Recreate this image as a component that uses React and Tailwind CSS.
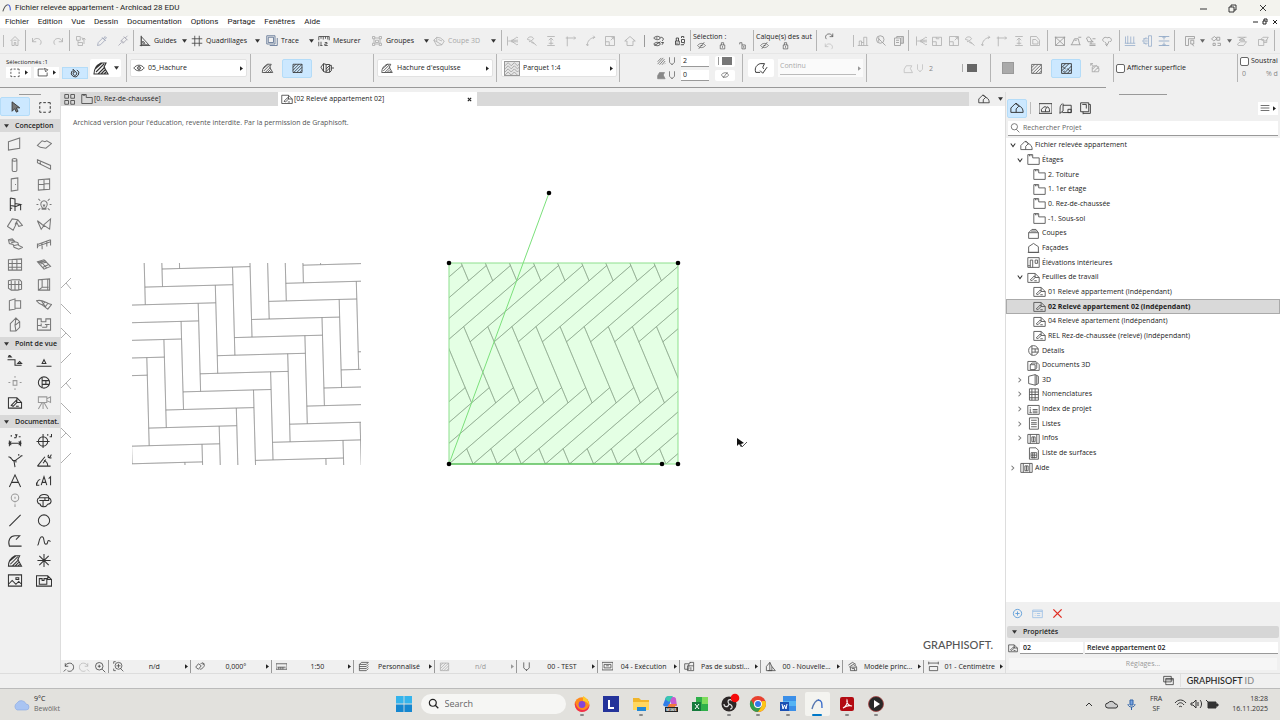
import React, { useState } from 'react';

// Line icons, all on a 16 x 16 grid
const ICONS = {
  home: 'M2 8 8 2l6 6M4 7v7h3v-4h2v4h3V7M6 7h4',
  undo: 'M2 4v5h5M2 9c2-4 5-5 8-4s5 5 2 8',
  redo: 'M14 4v5H9M14 9c-2-4-5-5-8-4s-5 5-2 8',
  pick: 'M2 2h5v5H2zM4 10h6v4H4zM9 3l2 4M12 12V4M10 6l2-2 2 2M4 7v3',
  dropper: 'M2 14l1-4 6-6 3 3-6 6zM8 3l5 5M10 5l2-3 2 2-3 2',
  syringe: 'M2 14l4-4M5 8l3 3 5-5-3-3zM9 2l5 5M11 4l3-3M6 7l3 3',
  setsquare: 'M3 1v14M1 14h14M3 2l10 11H3zM5 8v3h3z',
  grid: 'M5 1v14M11 1v14M1 5h14M1 11h14',
  trace: 'M5 14h10V4M1 1h11v11H1zM3 3h7v7H3z',
  ruler: 'M1 7V2h14v5M1 9v6M4 2v3M7 2v4M10 2v3M13 2v4M4 9v5M3 14h3M9 10h3v2H9v2h4',
  group: 'M2 2h3v3H2zM11 2h3v3h-3zM2 11h3v3H2zM11 11h3v3h-3zM5 4h6M5 12h6M4 5v6M12 5v6M6 7h4v3H6z',
  cut3d: 'M1 7l4-4 5 1 5 4-3 5-7 1zM5 3v6l7 4M5 9L1 7M7 6l5 2',
  trim: 'M2 2v12M3 8h4l6-4a2 2 0 1 1 1 3H7M7 8l6 4a2 2 0 1 0 1-3H7',
  adjust: 'M2 6c0-4 7-5 8-1l-3 3 7 6M7 8L4 9M2 6l4 1M11 11l-4-1',
  split: 'M3 2h10M3 14h10M8 5v8M5 7l3-3 3 3M5 11h6',
  intersect: 'M3 15V4h11M3 2v2H1M12 2l2 2-2 2',
  fillet: 'M3 14C3 8 7 4 13 3M11 1l2 2-2 2M2 12l1 2 2-1',
  resize: 'M2 2h12v12H2zM2 9h5v5M9 7l4-4M10 3h3v3',
  roof: 'M1 8l7-6 7 6H12v6H4V8z',
  layers: 'M1 4c3-3 7-3 9 0-2 3-6 3-9 0zM4 4h2M10 3c4 0 5 3 2 5M1 12c3-3 7-3 9 0-2 3-6 3-9 0zM2 14l8-5M11 10h3l-2 3',
  locks: 'M2 8h5v5H2zM3 8V4h3v4M4 10v2M10 6h4v4h-4zM10 4V2h3v2M12 13l2-2M9 13h4',
  lock: 'M4 7h8v7H4zM6 7V3h4v4M8 9v3',
  unlock: 'M7 7h6v7H7zM7 7V3H3v3M10 9v3',
  hidden: 'M1 8c4-5 10-5 14 0-4 5-10 5-14 0zM6 8h4M3 14L13 2',
  eye: 'M1 8c4-5 10-5 14 0-4 5-10 5-14 0zM6 8a2 2 0 1 0 4 0 2 2 0 1 0-4 0M8 7v2',
  levels: 'M1 14h14M3 14V8h3v6M9 14V3h4v11M6 10h3',
  findsel: 'M2 6a5 5 0 1 0 10 0 5 5 0 1 0-10 0M10 10l4 4M5 3v6M5 5l4 4',
  boxes: 'M2 4h8v10H2zM5 4V2h9v9h-4M4 7h4M4 10h4M12 2v9',
  box: 'M2 3h12v11H2zM2 9h5v5M7 3v2h4',
  geometry: 'M9 3H1v10h13V8M10 2l5 2-3 3z',
  solid: 'M2 2h8l4 5v7H2zM5 6h4l3 3v3H5z',
  crossbox: 'M2 3h12v11H2zM2 3l12 11M14 3L2 14M1 3h2M13 3h2',
  offset: 'M1 13h13M2 13l4-8h5l2 8M6 7h3M11 3h4',
  bool: 'M2 4c3-3 6 0 6 3l3 2H4zM6 12h8M6 14h8M8 9v3M10 5h4',
  cloudcut: 'M4 9c-5-3 2-8 4-5 5-3 8 4 4 5M5 9l3 4M11 8l-3 6M6 12l2 3',
  alignb: 'M1 14h14M2 2v9M5 1v11M9 2v9M13 2v9M1 11h14',
  alignr: 'M3 5h6M3 8h6M3 11h6M7 3l-5 5 5 5M10 1v14h4V1z',
  alignm: 'M1 2h14M1 8h14M1 14h14M8 3v3M6 4l2-2 2 2M8 10v3M6 12l2 2 2-2',
  anchor: 'M2 2h12v3H6v9H2zM9 7h4v5H9zM11 12l2 3',
  distrib: 'M2 5l4-3 3 3-4 3zM9 3h4v4H9zM4 11h3v3H4zM10 11h4v3h-4',
  elevate: 'M2 3h12M4 3l8 4H4l8-4M2 12l4-3h8l-4 5H3z',
  order: 'M2 6h7v8H2zM5 6l3-3h7l-3 5H9zM9 10h4V6',
  hatch: 'M1 14c0-6 3-9 7-11h5l-2 4 4 7zM3 12l8-8M5 14l7-7M8 14l4-4M11 14l2-2M2 9l7-6',
  hatchbox: 'M2 3h12v11H2zM2 7l4-4M2 11l8-8M3 14L14 3M7 14l7-7M11 14l3-3',
  wallhatch: 'M1 7l3-4 3 1v9L4 12zM4 3v9M7 4h4v9H7M11 5h2v6l-2 2M7 9l4-4M7 12l4-4M13 8h3',
  penhatch: 'M1 13L10 3M1 9l6-6M4 14l8-9M8 14l5-6M12 13l1-1',
  solidfill: 'M1 14V9l3-5h8l-2 4 3 6z',
  pen: 'M4 2v8l4 4 4-4V2M8 14v-2',
  noentry: 'M3 11a6 4 0 0 1 10-6 6 4 0 0 1-10 6zM4 14l9-12',
  contour: 'M2 13c-2-6 2-9 5-10h5l-2 4 1 2M2 13h5M7 11l3 3 5-7',
  marquee: 'M2 3h2M6 3h3M11 3h3v2M14 7v3M14 12v2h-2M9 14H6M4 14H2v-2M2 10V7M2 5V3',
  wall: 'M1 5l12-4v11L1 14z',
  slab: 'M1 9l5-5 3 1 2-1 5 3-6 5-6-1z',
  column: 'M5 3c0-2 5-2 5 0v11c0 2-5 2-5 0zM5 3c0 2 5 2 5 0',
  beam: 'M1 3l14 6v4L1 6zM4 5v3M1 3v3',
  door: 'M4 2l7-1v13l-7 1zM8 8h1',
  window: 'M2 3l12-1v11L2 14zM8 3v11M2 8l12-1',
  chair: 'M3 1v14M3 1l5 1v7M3 9l6 1 5-2-6-1M8 10v5M14 8v6M3 12h2',
  lamp: 'M6 11c-3-3-1-7 2-7s5 4 2 7v2H6zM6 12h4M2 2l2 2M14 2l-2 2M0 8h2M14 8h2M2 14l2-2M14 14l-2-2M7 8l1 2 1-2',
  roof2: 'M0 10l5-8 6 1 5 6-4 1-2-4-4 8zM11 3L8 8',
  mesh: 'M1 4l6 5 8-7-1 11-6-4-3 4zM1 4l5 4',
  stair: 'M1 3l4-1 3 3 3 1 1 3 4 2-4 2-5-2-1-3-4-1zM4 6l4-1M7 9l5-1M2 4h5',
  railing: 'M1 8l14-5M1 12V7M1 10l14-5M6 7v6M11 5v5M15 3v6',
  curtain: 'M1 3l14-1v12H1zM1 7h14M1 11h14M5 2v12M10 2v12',
  skylight: 'M1 5l7-2 7 7-7 3zM4 4l7 8M3 8l8-3M2 6l8-2M7 11l6-3',
  shelf: 'M1 4l4-1h8l2 2v8l-4 1H4l-3-2zM4 4v9M8 4v10M12 4v10M1 8h14',
  winbox: 'M2 3l12-1v12H2zM6 3v8h7M6 11l-4 3M12 3v11',
  panel: 'M2 4l6-2v11l-6 1zM8 4h6v8H8',
  shell: 'M0 4c6-2 9 2 16 4l-4 5C9 11 7 8 3 7zM5 4l5 7M9 5l-3 4M12 7l-3 4',
  morph: 'M3 7l6-6 4 4v6l-4 4H3zM9 1L8 9l1 6M8 9l5-4',
  zone: 'M1 2h4v3h5V2h5v12H1zM1 9h4M9 8h5M5 7v3M11 8v3M6 11h5',
  section: 'M0 5h8v6h7M1 2h3L2 0zM11 9l2-2 2 2z',
  elevation: 'M0 12h16M6 9l2-4 2 4z',
  interior: 'M6 6h4v5H6zM8 1v2M8 14v2M1 8h2M13 8h2',
  detail: 'M2 8a6 6 0 1 0 12 0A6 6 0 1 0 2 8M6 2v12M6 6h8M6 10h8M10 6v4',
  sheet: 'M1 3h9l5 5v6H1zM10 3v5h5M4 11l5-5 1 2-4 4zM9 12h3',
  camera: 'M2 2h9v6H2zM11 4l4-2v6l-4-2M6 8L2 15M7 8v7M8 8l4 7',
  dim: 'M1 11h14M2 8v6M14 8v6M4 9l-2 2 2 2M12 9l2 2-2 2M4 4V2M7 5h2l1-3H8M12 4h2',
  level: 'M2 9a5 5 0 1 0 10 0A5 5 0 1 0 2 9M7 1v15M0 9h14M12 3V1M14 4h2V1',
  radial: 'M3 5l4 4 1 6M7 9l8-6M1 4l3 1M5 8h4v2M12 3V1M14 3h2',
  angle: 'M1 14h14M1 14L9 4M8 8c3 1 4 3 4 6M7 11l3-4M13 5c2 0 2-3 3-3M13 2c-2 3 1 4 3 3',
  textA: 'M2 15L8 2l6 13M4 10h8',
  labelA: 'M0 13c1-5 2-6 4-6M0 10v3h3M5 13l3-9 3 9M6 10h4M13 6l2-2v9',
  tag: 'M4 5a4 4 0 1 0 8 0 4 4 0 1 0-8 0M8 4v2M8 10v1M8 12v3',
  change: 'M3 5c1-5 10-4 10 0 4 2 3 7-1 7-2 4-8 3-8 0-4-1-4-6-1-7zM3 5h10v3H7v7M3 8h4M9 5v3',
  line: 'M2 14L14 2',
  circle: 'M2 8a6 6 0 1 0 12 0A6 6 0 1 0 2 8',
  polyline: 'M15 14H2C0 8 3 3 8 3h5l-4 4',
  spline: 'M1 13c2 0 1-9 5-9 3 0 1 8 4 8 3 0 1-4 3-4 1 0 1 1 2 1',
  hotspot: 'M8 1v14M1 8h14M3 3l10 10M13 3L3 13',
  figure: 'M1 2h14v12H1zM1 12l4-4 4 4 3-3 3 3M9 5h3v2H9z',
  drawing: 'M0 3h12l4 4v7H0zM3 6h3v2h2V6h3v6H3zM12 3v4h4',
  storey: 'M1 2h6v4h8v8H1zM3 2v2M5 2v2',
  grid4: 'M1 2h5v5H1zM9 2h5v5H9zM1 10h5v5H1zM9 10h5v5H9z',
  house: 'M1 13V8l5-5h2l3 3M1 13h14M7 13V9l3-3c3 0 5 3 5 7M6 3c3 1 4 3 4 3',
  book: 'M0 2h16v12H0zM3 12V9l3-3h3M3 12h10M8 12V9l2-3c2 0 3 2 3 6',
  layout: 'M4 2C0 5 2 9 1 14M1 14l4-3V2M5 4h10v9H4M11 9h4v4h-4z',
  publish: 'M2 1h10v11H2zM4 3h5v5M12 3h2v11H5v-2M5 14v1',
  cutfold: 'M2 7l4-4h5l3 4v7H2zM2 7h12M5 5h7',
  facade: 'M2 7l6-4 6 4v7H2zM1 14h14',
  interieur: 'M1 2h14v12H1zM4 5v9M4 5h3v9M10 5h3v4h-3zM1 12h3',
  doc3d: 'M1 3h10l4 4v7H1zM4 7h6v6H4zM4 7l2-2h6v6l-2 2',
  view3d: 'M2 4l8-2 4 2v9l-4 2-8-2zM10 2v13M12 3v11',
  table: 'M3 1h11v14H3zM3 5h11M3 8h11M3 12h11M6 1v14M10 1v14',
  index: 'M1 3h14v11H1zM4 7v5M4 5v1M7 8h6M7 10h6M7 12h6M3 12h3',
  list: 'M3 1h11v14H3zM5 4h7M5 7h7M5 9h7M5 12h7',
  infos: 'M1 3h14v11H1zM4 3v11M6 6h4v6H6zM8 6v6M12 3v11',
  surfaces: 'M3 1h8l3 3v11H3zM5 7h7v6H5zM7 7v7M9 7v7M5 10h7',
  zoomback: 'M3 3v4h4M3 7c1-5 10-6 11 0s-5 8-8 6M1 14l3-3',
  zoomin: 'M2 7a5 5 0 1 0 10 0A5 5 0 1 0 2 7M11 11l4 4M7 5v4M5 7h4',
  fit: 'M3 7a5 5 0 1 0 10 0A5 5 0 1 0 3 7M11 11l4 4M8 4v6M5 7h6M1 1v3M1 1h3M1 14h3M1 11v3',
  rotate: 'M1 9l4-5 4 3-4 5zM8 4c4-2 7 1 5 4s-4 4-6 4M11 2l2 2-2 2',
  scale: 'M0 4h16v8H0zM4 9v3M7 9v3M10 9v3M2 9h12',
  stack: 'M5 2h10l-3 3H2zM2 8h10l3-3M2 11h10l3-3M2 14h10l3-3M2 5v9',
  frame: 'M0 2h16v11H0zM3 5h10v5H3zM6 7h4',
  override: 'M1 4h6v8H1zM5 7h9v7H5zM8 2h6v5M10 9v4M7 4l3-2',
  reno: 'M2 14V8l5-6 3 6v6zM7 2v12M10 8l5 6H4',
  model: 'M2 6l6-4 5 3M3 9l6-4 5 3M5 9h9v5H5zM7 11h4v3',
  dimstd: 'M1 1v4M15 1v4M1 3h14M2 8h12v6H2z',
  menu: 'M1 4h14M1 8h14M1 12h14',
  windows: 'M1 2h11v8H1zM4 12V5h11v9H4zM4 7h11'
};

const Icon = ({ name, className = 'w-3 h-3 text-[#555]' }) => (
  <svg viewBox="0 0 16 16" fill="none" stroke="currentColor" strokeWidth="1.1" className={`shrink-0 ${className}`} aria-hidden="true">
    <path d={ICONS[name]} />
  </svg>
);

const Down = ({ className = 'text-[#333]' }) => (
  <svg viewBox="0 0 6 4" className={`w-[5px] h-[4px] shrink-0 ${className}`} aria-hidden="true">
    <path d="M0 0h6L3 4z" fill="currentColor" />
  </svg>
);

const Right = ({ className = 'text-[#222]' }) => (
  <svg viewBox="0 0 4 6" className={`w-[3px] h-[5px] shrink-0 ${className}`} aria-hidden="true">
    <path d="M0 0v6l4-3z" fill="currentColor" />
  </svg>
);

const Group = ({ className, children }) => (
  <div className={`flex items-center shrink-0 h-full border-r border-[#b4b4b4] ${className}`}>{children}</div>
);

const IconButton = ({ name, tone = 'text-[#b0b0b0]' }) => (
  <button aria-label={name} className="flex items-center justify-center flex-1 h-5">
    <Icon name={name} className={`w-3 h-3 ${tone}`} />
  </button>
);

const ToolButton = ({ icon, label, className, arrow = true, tone = 'text-[#444]' }) => (
  <button className={`flex items-center shrink-0 h-5 ${className}`}>
    <Icon name={icon} className={`w-3 h-3 mr-[3px] ${tone}`} />
    <span>{label}</span>
    {arrow && <span className="ml-auto mr-1"><Down /></span>}
  </button>
);

// Barre de menu
const MENUS = ['Fichier', 'Edition', 'Vue', 'Dessin', 'Documentation', 'Options', 'Partage', 'Fenêtres', 'Aide'];

const TitleBar = () => (
  <header className="flex items-center h-4 bg-[#f3f3ee] text-[#222]">
    <svg viewBox="0 0 12 12" className="w-[10px] h-[10px] ml-[2px] mr-[3px]" fill="none" strokeWidth="1.3">
      <path d="M1 10C3 4 5 2 7 2" stroke="#555" />
      <path d="M7 2c2 0 3 3 3 7" stroke="#4058d8" />
    </svg>
    <h1 className="font-[Roboto,sans-serif] text-[8px] font-normal">Fichier relevée appartement - Archicad 28 EDU</h1>
    <svg viewBox="0 0 80 12" className="w-20 h-3 ml-auto mr-px" fill="none" stroke="#222" strokeWidth="0.9">
      <path d="M1 7h7M30 5h5v5h-5zM32 5V3h5v5h-2M61 3l6 6M67 3l-6 6" />
    </svg>
  </header>
);

const MenuBar = () => (
  <nav className="flex items-center h-3 bg-white pl-[5px] font-[Roboto,sans-serif] font-normal text-[8px]">
    <div className="flex gap-[9px]">
      {MENUS.map((m) => <button key={m}>{m}</button>)}
    </div>
    <svg viewBox="0 0 30 10" className="w-[30px] h-[10px] ml-auto" fill="none" stroke="#222">
      <path d="M3 5h5M13 4h3v3h-3zM14 4V2h3v3M23 3l4 4M27 3l-4 4" />
    </svg>
  </nav>
);

const LockBlock = ({ title, three }) => (
  <div className="w-full h-full pl-[2px] flex flex-col justify-center">
    <span className="whitespace-nowrap leading-[9px]">{title}</span>
    <div className="flex items-center gap-[11px] pl-[3px]">
      <Icon name="hidden" className="w-[11px] h-[9px] text-[#444]" />
      <Icon name="lock" className="w-[9px] h-[9px] text-[#444]" />
      {three && <Icon name="unlock" className="w-[9px] h-[9px] text-[#444]" />}
    </div>
  </div>
);

const EDIT_TOOLS = ['trim', 'adjust', 'split', 'intersect', 'fillet', 'resize', 'roof'];
const SHAPE_TOOLS = ['trim', 'box', 'resize', 'adjust', 'fillet', 'intersect', 'split', 'solid'];

const Toolbar = () => (
  <div className="flex items-center h-[25px] py-[2px] bg-[#f0f0f0] overflow-hidden">
    <Group className="w-[26px]">
      <span className="w-px h-3 ml-[3px] bg-[#bbb]" />
      <IconButton name="home" />
    </Group>
    <Group className="w-11">
      <IconButton name="undo" />
      <IconButton name="redo" />
    </Group>
    <Group className="w-16">
      <IconButton name="pick" />
      <IconButton name="dropper" tone="text-[#9fa6ba]" />
      <IconButton name="syringe" tone="text-[#a8a8b4]" />
    </Group>
    <Group className="w-[368px] pl-[5px]">
      <ToolButton icon="setsquare" label="Guides" className="w-[52px]" />
      <ToolButton icon="grid" label="Quadrillages" className="w-[73px]" />
      <ToolButton icon="trace" label="Trace" className="w-[54px] pl-[2px]" tone="text-[#5b7090]" />
      <ToolButton icon="ruler" label="Mesurer" className="w-[53px]" arrow={false} />
      <ToolButton icon="group" label="Groupes" className="w-[62px]" tone="text-[#aaa]" />
      <ToolButton icon="cut3d" label="Coupe 3D" className="w-[67px] text-[#a8a8a8]" tone="text-[#b0b0b0]" />
    </Group>
    <Group className="w-[189px]">
      <div className="flex w-[138px]">
        {EDIT_TOOLS.map((t) => <IconButton key={t} name={t} />)}
      </div>
      <span className="w-px h-3 mx-1 bg-[#999]" />
      <IconButton name="layers" tone="text-[#333]" />
      <IconButton name="locks" tone="text-[#333]" />
    </Group>
    <Group className="w-[63px]"><LockBlock title="Sélection :" three /></Group>
    <Group className="w-[63px]"><LockBlock title="Calque(s) des aut" /></Group>
    <Group className="w-[92px]">
      <div className="flex flex-col items-center w-6">
        <Icon name="redo" className="w-[10px] h-[10px] text-[#444]" />
        <Icon name="undo" className="w-[10px] h-[10px] text-[#bbb]" />
      </div>
      <span className="w-px h-3 ml-3 bg-[#bbb]" />
      <IconButton name="levels" />
      <IconButton name="findsel" tone="text-[#999]" />
      <IconButton name="boxes" tone="text-[#999]" />
    </Group>
    <Group className="w-[139px] px-1">
      {SHAPE_TOOLS.map((t) => <IconButton key={t} name={t} />)}
    </Group>
    <Group className="w-[72px] px-1">
      <IconButton name="crossbox" tone="text-[#999]" />
      <IconButton name="offset" tone="text-[#999]" />
      <IconButton name="bool" tone="text-[#999]" />
      <IconButton name="cloudcut" tone="text-[#999]" />
    </Group>
    <Group className="w-[55px] px-[2px]">
      <IconButton name="alignb" tone="text-[#9ab0cc]" />
      <IconButton name="alignr" tone="text-[#9ab0cc]" />
      <IconButton name="alignm" tone="text-[#8ba4c4]" />
    </Group>
    <Group className="w-[100px] pl-1">
      <IconButton name="anchor" tone="text-[#999]" />
      <Down className="text-[#666]" />
      <IconButton name="distrib" tone="text-[#999]" />
      <Down className="text-[#666]" />
      <IconButton name="elevate" />
      <IconButton name="order" />
    </Group>
  </div>
);

const Combo = ({ icon, label }) => (
  <button className="flex items-center flex-1 h-[18px] bg-white border border-[#e2e2e2] rounded-xs pl-[2px] pr-[3px]">
    {icon}
    <span className="ml-[3px]">{label}</span>
    <span className="ml-auto"><Right /></span>
  </button>
);

const PenRow = ({ icon, filled, label, value, onChange, children }) => (
  <div className="flex items-center h-3">
    <Icon name={icon} className={filled ? 'w-[10px] h-[10px] text-[#888] fill-[#888]' : 'w-[10px] h-[10px] text-[#555]'} />
    <Icon name="pen" className="w-[10px] h-[10px] text-[#555]" />
    <input
      aria-label={label}
      value={value}
      onChange={(e) => onChange(e.target.value)}
      className="w-7 h-[11px] ml-1 pl-[2px] bg-white border-b border-[#999] outline-none"
    />
    <button aria-label={`${label} couleur`} className="flex items-center justify-center w-5 h-[11px] ml-[6px] bg-white rounded-xs">
      {children}
    </button>
  </div>
);

const InfoBar = () => {
  const [pens, setPens] = useState({ line: '2', fill: '0', contour: '2', percent: '0' });
  const [showArea, setShowArea] = useState(false);
  const [subtract, setSubtract] = useState(false);
  const setPen = (key) => (value) => setPens((prev) => ({ ...prev, [key]: value }));

  return (
    <div className="flex items-center h-[29px] bg-[#f0f0f0] border-t border-[#e6e6e6] overflow-hidden">
      <Group className="w-[127px] pl-[6px]">
        <div>
          <p className="text-[6px] leading-[8px]">Sélectionnés :1</p>
          <div className="flex items-center gap-[3px] pt-px">
            <button aria-label="Sélection" className="flex items-center justify-center gap-1 w-[25px] h-[11px] bg-white">
              <Icon name="marquee" className="w-3 h-[11px] text-[#333]" /><Right />
            </button>
            <button aria-label="Géométrie" className="flex items-center justify-center gap-1 w-[25px] h-[11px] bg-white">
              <Icon name="geometry" className="w-3 h-[11px] text-[#333]" /><Right />
            </button>
            <button aria-label="Aimant" className="flex items-center justify-center w-[26px] h-3 bg-[#cce8ff] border border-[#b4dcf8]">
              <svg viewBox="0 0 16 16" className="w-[10px] h-[10px]" fill="none" stroke="#333" strokeWidth="1.5">
                <path d="M3 5a6 6 0 1 0 8-2M5 8a3 3 0 1 0 4-2M5 2l4 4-4 1z" />
              </svg>
            </button>
          </div>
        </div>
        <button aria-label="Hachure par défaut" className="flex items-center justify-around w-[31px] h-[18px] ml-[2px] bg-white rounded-xs">
          <Icon name="hatch" className="w-4 h-4 text-[#333]" /><Down />
        </button>
      </Group>
      <Group className="w-[124px] px-[3px]">
        <Combo icon={<Icon name="eye" className="w-3 h-3 text-[#333]" />} label="05_Hachure" />
      </Group>
      <Group className="w-[123px] pl-[2px]">
        <button aria-label="Contour" className="flex justify-center w-[29px]"><Icon name="hatch" className="w-[13px] h-3 text-[#444]" /></button>
        <button aria-label="Rectangle" className="flex items-center justify-center w-[30px] h-[19px] bg-[#cce8ff] border border-[#b4dcf8] rounded-xs">
          <Icon name="hatchbox" className="w-[13px] h-3 text-[#333]" />
        </button>
        <button aria-label="Rotation" className="flex justify-center w-[29px]"><Icon name="wallhatch" className="w-4 h-[14px] text-[#444]" /></button>
      </Group>
      <Group className="w-[123px] px-[3px]">
        <Combo icon={<Icon name="hatch" className="w-[14px] h-3 text-[#444]" />} label="Hachure d'esquisse" />
      </Group>
      <Group className="w-[123px] pl-1 pr-[2px]">
        <Combo
          icon={<svg viewBox="0 0 18 15" className="w-4 h-[15px] bg-[#e6e6e6] border border-[#999]">
            <path d="M0 4l4-4 4 4 4-4 4 4 2-2M0 8l4-4 4 4 4-4 4 4 2-2M0 12l4-4 4 4 4-4 4 4 2-2M0 16l4-4 4 4 4-4 4 4" fill="none" stroke="#999" />
          </svg>}
          label="Parquet 1:4"
        />
      </Group>
      <Group className="w-[123px] justify-end pr-[7px]">
        <div className="flex flex-col gap-[2px]">
          <PenRow icon="penhatch" label="Stylo hachure" value={pens.line} onChange={setPen('line')}>
            <span className="w-px h-2 mr-[3px] bg-[#999]" /><span className="w-[10px] h-2 bg-[#777]" />
          </PenRow>
          <PenRow icon="solidfill" filled label="Stylo fond" value={pens.fill} onChange={setPen('fill')}>
            <Icon name="noentry" className="w-2 h-2 text-[#333]" />
          </PenRow>
        </div>
      </Group>
      <Group className="w-[124px] pl-[5px] pr-[3px] gap-1">
        <button aria-label="Type de contour" className="flex items-center justify-center w-[26px] h-[18px] bg-white rounded-xs">
          <Icon name="contour" className="w-[14px] h-[14px] text-[#333]" />
        </button>
        <button className="flex items-center flex-1 h-[18px] bg-[#fafafa] px-[2px] text-[#aaa]">
          <span className="flex-1 text-left border-b border-[#bbb] leading-[9px] pb-1 mr-[2px]">Continu</span>
          <Right className="text-[#999]" />
        </button>
      </Group>
      <Group className="w-[124px] pl-9 text-[#888]">
        <Icon name="solidfill" className="w-3 h-[11px] text-[#bbb]" />
        <Icon name="pen" className="w-[10px] h-[10px] text-[#bbb]" />
        <input aria-label="Stylo contour" value={pens.contour} onChange={(e) => setPen('contour')(e.target.value)} className="w-7 h-3 ml-[2px] pl-[2px] bg-transparent outline-none" />
        <span className="w-px h-2 ml-[7px] mr-1 bg-[#aaa]" />
        <span className="w-[10px] h-2 bg-[#666]" />
      </Group>
      <Group className="w-[123px] pl-[2px]">
        <button aria-label="Fond plein" className="flex justify-center w-[29px]"><span className="w-3 h-3 bg-[#aaa] border border-[#999]" /></button>
        <button aria-label="Hachure projet" className="flex justify-center w-[29px]"><Icon name="hatchbox" className="w-[13px] h-[13px] text-[#666]" /></button>
        <button aria-label="Hachure élément" className="flex items-center justify-center w-[30px] h-[19px] bg-[#cce8ff] border border-[#b4dcf8] rounded-xs">
          <svg viewBox="0 0 16 16" className="w-[13px] h-[13px]" fill="none" stroke="#333" strokeWidth="1.1">
            <path d="M2 2h12v12H2zM2 7l5-5M9 14l5-5M2 11L11 2M5 14l9-9M4 6l3 3M9 8l3 3M4 12l2-1" />
          </svg>
        </button>
        <button aria-label="Hachure déformée" className="flex justify-center w-[29px]">
          <svg viewBox="0 0 16 16" className="w-3 h-3" fill="none" stroke="#b5b5b5" strokeWidth="1.4">
            <path d="M3 7a5 5 0 1 1 8 6H3zM3 10l6-6M5 13l7-7M1 2l4 4M1 5V2h3" />
          </svg>
        </button>
      </Group>
      <Group className="w-[124px] pl-[2px]">
        <label className="flex items-center gap-[2px] whitespace-nowrap">
          <input type="checkbox" checked={showArea} onChange={(e) => setShowArea(e.target.checked)} className="appearance-none w-[9px] h-[9px] bg-white border border-[#666] rounded-xs" />
          Afficher superficie
        </label>
      </Group>
      <div className="pl-[2px] flex-1 min-w-0">
        <label className="flex items-center gap-[2px] h-3 whitespace-nowrap">
          <input type="checkbox" checked={subtract} onChange={(e) => setSubtract(e.target.checked)} className="appearance-none shrink-0 w-[9px] h-[9px] bg-white border border-[#666] rounded-xs" />
          Soustrai
        </label>
        <div className="flex items-center h-[14px] text-[#888]">
          <input aria-label="Pourcentage" value={pens.percent} onChange={(e) => setPen('percent')(e.target.value)} className="w-[26px] shrink-0 pl-[2px] outline-none" />
          <span className="whitespace-nowrap">% d</span>
        </div>
      </div>
    </div>
  );
};

// Palette d'outils
const PALETTE = [
  { title: 'Conception', tools: ['wall', 'slab', 'column', 'beam', 'door', 'window', 'chair', 'lamp', 'roof2', 'mesh', 'stair', 'railing', 'curtain', 'skylight', 'shelf', 'winbox', 'panel', 'shell', 'morph', 'zone'] },
  { title: 'Point de vue', tools: ['section', 'elevation', 'interior', 'detail', 'sheet', 'camera'] },
  { title: 'Documentat.', tools: ['dim', 'level', 'radial', 'angle', 'textA', 'labelA', 'tag', 'change', 'line', 'circle', 'polyline', 'spline', 'hatch', 'hotspot', 'figure', 'drawing'] }
];
const DARK_TOOLS = ['chair', 'section', 'elevation', 'detail', 'sheet', 'dim', 'level', 'radial', 'angle', 'labelA', 'change', 'hatch', 'drawing', 'figure', 'circle', 'line', 'hotspot', 'spline', 'polyline', 'textA'];
const PALE_TOOLS = ['interior', 'camera', 'tag'];

const toolTone = (tool) => {
  if (DARK_TOOLS.includes(tool)) return 'text-[#333]';
  if (PALE_TOOLS.includes(tool)) return 'text-[#999]';
  return 'text-[#777]';
};

const Toolbox = () => (
  <aside className="w-[61px] shrink-0 bg-[#f0f0f0] border-r border-[#ddd]">
    <div className="w-[22px] h-px mx-auto mt-[2px] mb-[2px] bg-[#999]" />
    <div className="flex">
      <button aria-label="Flèche" className="flex items-center justify-center w-[30px] h-[19px] bg-[#cce8ff] border border-[#b4dcf8] rounded-xs">
        <svg viewBox="0 0 10 14" className="w-[9px] h-3"><path d="M1 1v11l3-3 2 4 2-1-2-4h4z" fill="#777" stroke="#333" /></svg>
      </button>
      <button aria-label="Marquee" className="flex items-center justify-center w-[29px] h-[19px]">
        <Icon name="marquee" className="w-4 h-[14px] text-[#333]" />
      </button>
    </div>
    {PALETTE.map((section) => (
      <section key={section.title} className="pt-[3px]">
        <h2 className="flex items-center h-[13px] pl-1 mb-[2px] bg-[#d9d9d9] text-[7px] font-semibold whitespace-nowrap">
          <Down /><span className="ml-[6px]">{section.title}</span>
        </h2>
        <div className="grid grid-cols-2 pr-[2px]">
          {section.tools.map((tool) => (
            <button key={tool} aria-label={tool} className="flex items-center justify-center h-5">
              <Icon name={tool} className={`w-4 h-[15px] ${toolTone(tool)}`} />
            </button>
          ))}
        </div>
      </section>
    ))}
  </aside>
);

const Tabs = () => (
  <div className="flex items-stretch h-[14px] bg-[#d9d9d9]">
    <button aria-label="Vue d'ensemble" className="flex items-center justify-center w-[18px]"><Icon name="grid4" className="w-3 h-3 text-[#444]" /></button>
    <button className="flex items-center w-[199px] pl-[2px]"><Icon name="storey" className="w-3 h-3 mr-px text-[#444]" />[0. Rez-de-chaussée]</button>
    <div className="flex items-center w-[199px] pl-[3px] bg-white">
      <Icon name="sheet" className="w-3 h-3 mr-px text-[#444]" />
      <span>[02 Relevé appartement 02]</span>
      <button aria-label="Fermer" className="ml-auto mr-[5px]">
        <svg viewBox="0 0 6 6" className="w-[5px] h-[5px]"><path d="M1 1l4 4M5 1L1 5" stroke="#222" strokeWidth="1.4" /></svg>
      </button>
    </div>
    <button aria-label="Options d'onglet" className="flex items-center justify-between w-9 pl-2 pr-[2px] ml-auto bg-[#efefef]">
      <Icon name="house" className="w-[14px] h-3 text-[#333]" /><Down />
    </button>
  </div>
);

// Motif parquet : lames 4 x 1 posées en bâton rompu dans la base (a, b)
const herringbone = ([ox, oy], a, b) => {
  const at = (x, y) => `${(ox + x * a[0] + y * b[0]).toFixed(1)} ${(oy + x * a[1] + y * b[1]).toFixed(1)}`;
  const plank = (x, y, w, h) => `M${at(x, y)}L${at(x + w, y)} ${at(x + w, y + h)} ${at(x, y + h)}Z`;
  let d = '';
  for (let i = -24; i <= 24; i++) {
    for (let j = -5; j <= 5; j++) {
      const x = 5 * j - i;
      const y = 3 * j + i;
      d += plank(x, y, 4, 1) + plank(x + 4, y, 1, 4);
    }
  }
  return d;
};

const LEFT_PARQUET = herringbone([101, 163], [17.62, -0.48], [0.48, 17.62]);
const RIGHT_PARQUET = herringbone([388, 358], [17.7, -15.27], [-6.4, -15.27]);
const HANDLES = [[388, 157], [617, 157], [388, 358], [601, 358], [617, 358], [488, 87]];

const Drawing = () => (
  <svg className="w-full h-full" fill="none" role="img" aria-label="Plan">
    <defs>
      <clipPath id="left"><rect x="71" y="157" width="229" height="202" /></clipPath>
      <clipPath id="right"><rect x="388" y="157" width="229" height="201" /></clipPath>
    </defs>
    <path
      d="M0 182l10-10M5 177l5 6M0 198l10 10M0 222l10 10M5 227l-5 5M0 257l10-10M0 282l10-10M5 277l5 6M0 297l10 10M0 322l10 10M5 327l-5 5M0 357l10-10"
      stroke="#999" strokeWidth="0.8"
    />
    <path d={LEFT_PARQUET} clipPath="url(#left)" stroke="#888" strokeWidth="0.5" />
    <rect x="388" y="157" width="229" height="201" fill="#e4ffe4" />
    <path d={RIGHT_PARQUET} clipPath="url(#right)" stroke="#7f997f" strokeWidth="0.5" />
    <rect x="388" y="157" width="229" height="201" stroke="#8de08d" />
    <path d="M388 358h213" stroke="#3fae3f" />
    <path d="M388 358L488 87" stroke="#7be07b" />
    {HANDLES.map(([x, y]) => <circle key={`${x}-${y}`} cx={x} cy={y} r="2.3" fill="#000" />)}
    <path d="M676 332v8l2-2 2 3 1-1-1-2 3-1z" fill="#111" />
    <path d="M679 338l2 3 5-5" stroke="#555" />
  </svg>
);

const QUICK_OPTIONS = [
  { icon: 'fit', label: 'n/d' },
  { icon: 'rotate', label: '0,000°' },
  { icon: 'scale', label: '1:50' },
  { icon: 'stack', label: 'Personnalisé' },
  { icon: 'hatchbox', label: 'n/d', muted: true },
  { icon: 'pen', label: '00 - TEST' },
  { icon: 'frame', label: '04 - Exécution' },
  { icon: 'override', label: 'Pas de substi...' },
  { icon: 'reno', label: '00 - Nouvelle...' },
  { icon: 'model', label: 'Modèle princ...' },
  { icon: 'dimstd', label: '01 - Centimètre' }
];

const QuickOptions = () => (
  <div className="flex items-center h-[13px] bg-[#f0f0f0]">
    <div className="flex items-center justify-around w-12 h-full shrink-0 border-r border-[#999]">
      <button aria-label="Zoom précédent"><Icon name="zoomback" className="w-3 h-3 text-[#444]" /></button>
      <button aria-label="Zoom suivant"><Icon name="zoomback" className="w-3 h-3 text-[#bbb] -scale-x-100" /></button>
      <button aria-label="Zoom avant"><Icon name="zoomin" className="w-3 h-3 text-[#444]" /></button>
    </div>
    {QUICK_OPTIONS.map((opt, i) => (
      <button
        key={opt.icon}
        className={`flex items-center flex-1 min-w-0 h-full pl-1 pr-[2px] border-[#999] ${i < 10 ? 'border-r' : ''} ${opt.muted ? 'text-[#999]' : ''}`}
      >
        <Icon name={opt.icon} className={opt.muted ? 'w-[11px] h-[11px] text-[#aaa]' : 'w-[11px] h-[11px] text-[#444]'} />
        <span className="flex-1 text-center whitespace-nowrap">{opt.label}</span>
        <Right className={opt.muted ? 'text-[#999]' : 'text-[#222]'} />
      </button>
    ))}
  </div>
);

// Navigateur de projet
const TREE = [
  { level: 0, icon: 'house', label: 'Fichier relevée appartement', state: 'open' },
  { level: 1, icon: 'storey', label: 'Étages', state: 'open' },
  { level: 2, icon: 'storey', label: '2. Toiture' },
  { level: 2, icon: 'storey', label: '1. 1er étage' },
  { level: 2, icon: 'storey', label: '0. Rez-de-chaussée' },
  { level: 2, icon: 'storey', label: '-1. Sous-sol' },
  { level: 1, icon: 'cutfold', label: 'Coupes' },
  { level: 1, icon: 'facade', label: 'Façades' },
  { level: 1, icon: 'interieur', label: 'Élévations intérieures' },
  { level: 1, icon: 'sheet', label: 'Feuilles de travail', state: 'open' },
  { level: 2, icon: 'sheet', label: '01 Relevé appartement (Indépendant)' },
  { level: 2, icon: 'sheet', label: '02 Relevé appartement 02 (Indépendant)', selected: true },
  { level: 2, icon: 'sheet', label: '04 Relevé apartement (Indépendant)' },
  { level: 2, icon: 'sheet', label: 'REL Rez-de-chaussée (relevé) (Indépendant)' },
  { level: 1, icon: 'detail', label: 'Détails' },
  { level: 1, icon: 'doc3d', label: 'Documents 3D' },
  { level: 1, icon: 'view3d', label: '3D', state: 'closed' },
  { level: 1, icon: 'table', label: 'Nomenclatures', state: 'closed' },
  { level: 1, icon: 'index', label: 'Index de projet', state: 'closed' },
  { level: 1, icon: 'list', label: 'Listes', state: 'closed' },
  { level: 1, icon: 'infos', label: 'Infos', state: 'closed' },
  { level: 1, icon: 'surfaces', label: 'Liste de surfaces' },
  { level: 0, icon: 'infos', label: 'Aide', state: 'closed' }
];
const INDENT = ['pl-1', 'pl-[11px]', 'pl-[17px]'];

const TreeRow = ({ item }) => (
  <li className={`flex items-center flex-1 basis-0 min-h-0 ${INDENT[item.level]} ${item.selected ? 'bg-[#d9d9d9] outline outline-[#aaa] -outline-offset-1 font-bold' : ''}`}>
    <svg viewBox="0 0 8 8" className="w-[6px] h-[6px] mr-1 shrink-0" fill="none" stroke="#333" strokeWidth="1.4">
      {item.state === 'open' && <path d="M1 2l3 4 3-4" />}
      {item.state === 'closed' && <path d="M2 1l3 3-3 3" stroke="#777" />}
    </svg>
    <Icon name={item.icon} className="w-[13px] h-[13px] mr-[2px] text-[#555]" />
    <span className="whitespace-nowrap">{item.label}</span>
  </li>
);

const Navigator = () => {
  const [search, setSearch] = useState('');
  const [sheetId, setSheetId] = useState('02');
  const [sheetName, setSheetName] = useState('Relevé appartement 02');

  return (
    <aside className="flex flex-col w-[275px] shrink-0 bg-[#f0f0f0] border-l border-[#ddd]">
      <div className="w-12 h-px mx-auto mt-[2px] bg-[#999]" />
      <div className="flex items-center h-[26px] pl-px pr-[2px]">
        <button aria-label="Plan de projet" className="flex items-center justify-center w-5 h-[19px] bg-[#cce8ff] border border-[#b4dcf8] rounded-xs">
          <Icon name="house" className="w-[14px] h-[14px] text-[#333]" />
        </button>
        <span className="w-px h-3 mx-[3px] bg-[#bbb]" />
        <div className="flex gap-[7px] ml-[5px]">
          <button aria-label="Plan de vues"><Icon name="book" className="w-[13px] h-[13px] text-[#333]" /></button>
          <button aria-label="Carnet de mises en page"><Icon name="layout" className="w-[13px] h-[13px] text-[#333]" /></button>
          <button aria-label="Jeux de publication"><Icon name="publish" className="w-[13px] h-[13px] text-[#333]" /></button>
        </div>
        <button aria-label="Menu" className="flex items-center justify-center gap-[3px] w-5 h-[13px] ml-auto bg-white">
          <Icon name="menu" className="w-[10px] h-[10px] text-[#333]" /><Right />
        </button>
      </div>
      <div className="flex items-center h-[15px] mx-[2px] mb-[2px] pl-[2px] bg-white border-b border-[#999]">
        <svg viewBox="0 0 16 16" className="w-[10px] h-[10px]" fill="none" stroke="#555" strokeWidth="1.2">
          <path d="M2 6a5 5 0 1 0 10 0A5 5 0 1 0 2 6M10 10l5 5" />
        </svg>
        <input
          aria-label="Rechercher"
          placeholder="Rechercher Projet"
          value={search}
          onChange={(e) => setSearch(e.target.value)}
          className="flex-1 ml-[3px] outline-none placeholder:text-[#666]"
        />
      </div>
      <div className="flex-1 bg-white">
        <ul className="flex flex-col h-[337px]">
          {TREE.map((item) => <TreeRow key={item.label} item={item} />)}
        </ul>
      </div>
      <div className="flex items-start gap-[9px] h-6 pt-[6px] pl-[6px]">
        <button aria-label="Ajouter">
          <svg viewBox="0 0 16 16" className="w-[11px] h-[11px]" fill="none" stroke="#5b9bd8" strokeWidth="1.3"><path d="M2 8a6 6 0 1 0 12 0A6 6 0 1 0 2 8M8 5v6M5 8h6" /></svg>
        </button>
        <button aria-label="Réglages de vue">
          <svg viewBox="0 0 16 16" className="w-[11px] h-[11px]" fill="none" stroke="#9cc0e6" strokeWidth="1.2"><path d="M1 3h14v11H1zM1 5h14M4 8h1M7 8h5M4 11h1M7 11h5" /></svg>
        </button>
        <button aria-label="Supprimer">
          <svg viewBox="0 0 16 16" className="w-[11px] h-[11px]" fill="none" stroke="#e02f24" strokeWidth="2"><path d="M2 2l12 12M14 2L2 14" /></svg>
        </button>
      </div>
      <h2 className="flex items-center h-3 mx-px pl-[5px] bg-[#d6d6d6] text-[7px] font-semibold rounded-xs">
        <Down /><span className="ml-[6px]">Propriétés</span>
      </h2>
      <div className="flex items-center h-5 gap-[2px] px-[2px] font-semibold">
        <Icon name="sheet" className="w-[10px] h-[10px] text-[#333]" />
        <input aria-label="Identifiant" value={sheetId} onChange={(e) => setSheetId(e.target.value)} className="w-[63px] h-3 pl-[3px] bg-white border-b border-[#999] outline-none" />
        <input aria-label="Nom" value={sheetName} onChange={(e) => setSheetName(e.target.value)} className="flex-1 h-3 pl-[2px] bg-white border-b border-[#999] outline-none" />
      </div>
      <button className="h-3 mx-[3px] mb-[3px] bg-[#f6f6f6] text-[#999]">Réglages...</button>
    </aside>
  );
};

// Icônes de la barre des tâches
const TaskIcon = ({ label, running, active, children }) => (
  <button aria-label={label} className={`flex flex-col items-center w-[25px] h-6 pt-1 rounded-xs ${active ? 'bg-[#f4f4f0]' : ''}`}>
    <svg viewBox="0 0 16 16" className="w-4 h-4 overflow-visible">{children}</svg>
    {running && <span className={active ? 'w-[10px] h-[2px] mt-[2px] rounded-full bg-[#0078c8]' : 'w-1 h-[2px] mt-[2px] rounded-full bg-[#888]'} />}
  </button>
);

const Taskbar = () => (
  <footer className="grid grid-cols-[1fr_auto_1fr] items-center h-8 pb-[2px] bg-[#e2e1dd] border-t border-[#bbb]">
    <div className="flex items-center gap-1 pl-3">
      <svg viewBox="0 0 18 14" className="w-[18px] h-[14px]"><path d="M5 13a4 4 0 0 1 0-7 5 5 0 0 1 9 1 3 3 0 0 1 0 6z" fill="#a9c4f2" stroke="#89a7e0" strokeWidth="0.6" /></svg>
      <div className="text-[7px] leading-[10px]">
        <p>9°C</p>
        <p className="text-[#666]">Bewölkt</p>
      </div>
    </div>
    <div className="flex items-center gap-1">
      <TaskIcon label="Démarrer"><path d="M0 0h7.6v7.6H0zM8.4 0H16v7.6H8.4z" fill="#35b4ec" /><path d="M0 8.4h7.6V16H0zM8.4 8.4H16V16H8.4z" fill="#1587d0" /></TaskIcon>
      <label className="flex items-center w-[145px] h-5 pl-[7px] bg-[#f6f6f4] rounded-full">
        <svg viewBox="0 0 16 16" className="w-[11px] h-[11px]" fill="none" stroke="#222" strokeWidth="1.8"><path d="M2 7a5 5 0 1 0 10 0A5 5 0 1 0 2 7M11 11l4 4" /></svg>
        <input placeholder="Search" aria-label="Search" className="w-24 ml-[6px] bg-transparent text-[9px] outline-none placeholder:text-[#666]" />
      </label>
      <div className="flex items-center justify-between w-[319px]">
        <TaskIcon label="Firefox" running>
          <circle cx="8" cy="8.5" r="7.3" fill="#ff8a1c" />
          <path d="M1 6c-1 6 3 10 7 10s8-3 7.5-8c-1 4-4 6-7 6S2 11 1 6z" fill="#f0304e" />
          <circle cx="8" cy="8.5" r="3.4" fill="#8546d8" />
          <path d="M9 0c4 2 6 5 6 9-2-3-4-4-6-4z" fill="#ffc928" />
        </TaskIcon>
        <TaskIcon label="L"><path d="M0 0h16v16H0z" fill="#24339a" /><path d="M6 4v8h5" fill="none" stroke="#fff" strokeWidth="2" /></TaskIcon>
        <TaskIcon label="Explorateur" running><path d="M0 2h6l2 2h8v10H0z" fill="#f0b52a" /><path d="M0 6h16v8H0z" fill="#ffd75e" /><path d="M4 11h9v4H4z" fill="#2289d6" /></TaskIcon>
        <TaskIcon label="Copilot M365">
          <path d="M1 9l3-8c1-1 5-1 6 0L7 10c-1 1-5 1-6-1z" fill="#2f7de8" />
          <path d="M7 1h5c1 0 2 1 2 2l1 7h-5z" fill="#c85ad0" />
          <path d="M3 3c1-2 2-3 4-3h4L7 6z" fill="#3cc8b0" />
          <path d="M7 8h8l-3 4H5z" fill="#f07a3c" />
          <path d="M3 11h13v5H3z" fill="#222" />
          <text x="4" y="15" fontSize="4" fontWeight="bold" fill="#fff">M365</text>
        </TaskIcon>
        <TaskIcon label="Excel"><path d="M4 1h12v14H4z" fill="#2fb04a" /><path d="M10 1h6v7h-6z" fill="#7fdc5c" /><path d="M0 6h9v9H0z" fill="#157a3c" /><path d="M3 8l4 5M7 8l-4 5" stroke="#fff" /></TaskIcon>
        <TaskIcon label="OBS" running>
          <circle cx="8" cy="8" r="7.5" fill="#2b2626" />
          <path d="M8 8c-3-4 2-6 3-3M8 8c4 1 4 5 1 5M8 8c-1 4-5 3-5 0" fill="none" stroke="#ddd" strokeWidth="1.2" />
          <circle cx="14" cy="2" r="4.3" fill="#f50a0a" />
        </TaskIcon>
        <TaskIcon label="Chrome" running>
          <circle cx="8" cy="8" r="8" fill="#e8412f" />
          <path d="M1 4l7 12A8 8 0 0 1 1 4z" fill="#30a04c" />
          <path d="M1 4l3.500 6L8 16l4-6H4z" fill="#30a04c" />
          <path d="M8 16l4-6V5h3.400A8 8 0 0 1 8 16z" fill="#fbc618" />
          <circle cx="8" cy="8" r="4" fill="#fff" />
          <circle cx="8" cy="8" r="3" fill="#3478e8" />
        </TaskIcon>
        <TaskIcon label="Word" running><path d="M3 0h13v15H3z" fill="#3b8fe8" /><path d="M3 5h13v5H3z" fill="#55b4f4" /><path d="M0 6h9v9H0z" fill="#1a50b4" /><path d="M2 8l1 5 1.5-4L6 13l1-5" fill="none" stroke="#fff" /></TaskIcon>
        <TaskIcon label="Archicad" running active><path d="M3 13C5 6 7 4 10 4" fill="none" stroke="#5878b0" strokeWidth="1.4" /><path d="M9 4c4 0 4 3 4 8" fill="none" stroke="#3e70cc" strokeWidth="1.4" /></TaskIcon>
        <TaskIcon label="Acrobat" running><rect x="1" y="1" width="14" height="14" rx="2" fill="#b30b12" /><path d="M4 12c3-1 5-6 4-8-1 3 2 6 5 6-3-1-6 0-9 2z" fill="none" stroke="#fff" strokeWidth="1.1" /></TaskIcon>
        <TaskIcon label="Lecteur" running><circle cx="8" cy="8" r="7.5" fill="#282828" stroke="#a44" strokeWidth="0.8" /><path d="M6 4l6 4-6 4z" fill="#fff" /></TaskIcon>
      </div>
    </div>
    <div className="flex items-center justify-end pr-3 text-[7px] leading-[10px] text-[#333]">
      <svg viewBox="0 0 56 14" className="w-14 h-[14px] mr-3" fill="none" stroke="#333">
        <path d="M4 9l3-3 3 3" />
        <path d="M26 11a2.5 2.5 0 0 1 0-5 4 4 0 0 1 7 1 2 2 0 0 1 1 4z" fill="#ccc" />
        <path d="M48 3h3v5h-3z" stroke="#2f62a8" fill="#7aa4e0" />
        <path d="M46 7c0 4 7 4 7 0M49.5 10v3" stroke="#2f62a8" />
      </svg>
      <div className="text-center mr-3"><p>FRA</p><p>SF</p></div>
      <svg viewBox="0 0 46 14" className="w-[46px] h-[14px] mr-3" fill="none" stroke="#333">
        <path d="M1 6c3-4 8-4 11 0M3 8c2-3 5-3 7 0M5 10c1-1 2-1 3 0" />
        <path d="M17 6h2l3-3v8l-3-3h-2zM24 5v4M26 3c2 2 2 6 0 8" />
        <path d="M34 5h8v6h-8zM42 7h2v2h-2M32 3l3 3" fill="#333" />
      </svg>
      <div className="text-right"><p>18:28</p><p>16.11.2025</p></div>
    </div>
  </footer>
);

const App = () => (
  <div className="flex flex-col w-full min-h-screen bg-[#f0f0f0] font-['Open_Sans','Noto_Sans',sans-serif] text-[7px] leading-[10px] font-medium text-[#222] overflow-hidden">
    <TitleBar />
    <MenuBar />
    <Toolbar />
    <InfoBar />
    <div className="h-[10px]"><div className="h-[6px] mr-[174px] border-b border-[#999]" /></div>
    <div className="flex flex-1">
      <Toolbox />
      <main className="flex flex-col flex-1 min-w-0 bg-white">
        <Tabs />
        <div className="relative flex flex-col flex-1">
          <p className="absolute left-3 top-3 font-normal text-[#555]">
            Archicad version pour l'éducation, revente interdite. Par la permission de Graphisoft.
          </p>
          <div className="flex flex-1"><Drawing /></div>
          <span className="absolute right-3 bottom-2 font-[Lato,sans-serif] text-[11px] leading-[14px] text-[#555]">GRAPHISOFT.</span>
        </div>
        <QuickOptions />
      </main>
      <Navigator />
    </div>
    <div className="flex items-center justify-end h-[15px] border-t border-[#ddd] pb-px">
      <button aria-label="Fenêtres"><Icon name="windows" className="w-[11px] h-[11px] text-[#333]" /></button>
      <span className="w-px h-full mx-[6px] bg-[#e0e0e0]" />
      <a href="#graphisoft-id" className="mr-[26px] font-[Lato,sans-serif] text-[9px] leading-[12px]">
        GRAPHISOFT <span className="text-[#888]">ID</span>
      </a>
    </div>
    <Taskbar />
  </div>
);

export default App;
